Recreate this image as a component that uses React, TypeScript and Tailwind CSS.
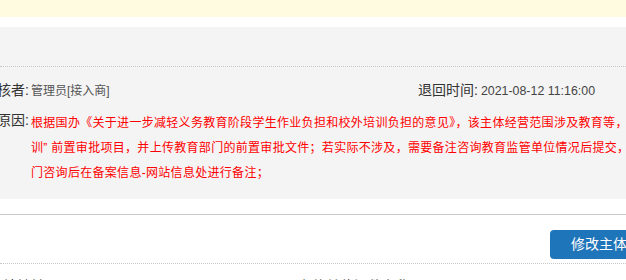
const font = { fontFamily: '"Liberation Sans", "Noto Sans CJK SC", sans-serif' };

const reasonLines = [
  '根据国办《关于进一步减轻义务教育阶段学生作业负担和校外培训负担的意见》，该主体经营范围涉及教育等，要求提供“教育培',
  '训” 前置审批项目，并上传教育部门的前置审批文件；若实际不涉及，需要备注咨询教育监管单位情况后提交，请与教育部',
  '门咨询后在备案信息-网站信息处进行备注；',
];

function Label({ children }: { children: React.ReactNode }) {
  return (
    <div className="w-[80px] shrink-0 text-right text-[14px] leading-[25px] text-[#333]">
      {children}
    </div>
  );
}

export default function App() {
  return (
    <div className="w-[626px] h-[280px] overflow-hidden bg-white" style={font}>
      <div className="h-[17px] bg-[#fffbe0]" />
      <div className="h-[10px]" />

      <div className="bg-[#f4f4f4] pb-[13px]">
        <div className="h-[40px] border-b border-dotted border-[#c8c8c8]" />
        <div className="-ml-[51px] w-[760px] pt-[11px]">
          <div className="flex items-start">
            <Label>审核者:</Label>
            <div className="ml-[2px] w-[387px] text-[12px] leading-[27px] text-[#555]">管理员[接入商]</div>
            <div className="text-[14px] leading-[25px] text-[#333]">退回时间:</div>
            <div className="ml-[3px] text-[12.4px] leading-[27px] text-[#444]">2021-08-12 11:16:00</div>
          </div>
          <div className="flex items-start mt-[6px]">
            <div className="w-[80px] shrink-0 text-right text-[14px] leading-[19px] text-[#333]">退回原因:</div>
            <div className="ml-[2px] text-[12px] leading-[25px] text-[#ff0000] whitespace-nowrap tracking-[0.3px]">
              {reasonLines.map((l) => (
                <div key={l}>{l}</div>
              ))}
            </div>
          </div>
        </div>
      </div>

      <div className="h-[15px]" />
      <div className="border-t border-[#c8c8c8]" />

      <div className="flex justify-end pt-[15px] pb-[4px] border-b border-dotted border-[#c8c8c8]">
        <button className="-mr-[50px] h-[29px] rounded-[4px] bg-[#1f75b9] px-[21px] text-[14px] text-white whitespace-nowrap">
          修改主体信息
        </button>
      </div>

      <div className="flex pt-[12px] text-[14px] leading-[20px] text-[#333]">
        <div className="w-[298px] pl-[3px]">站地址</div>
        <div>主体单位证件名称</div>
      </div>
    </div>
  );
}
